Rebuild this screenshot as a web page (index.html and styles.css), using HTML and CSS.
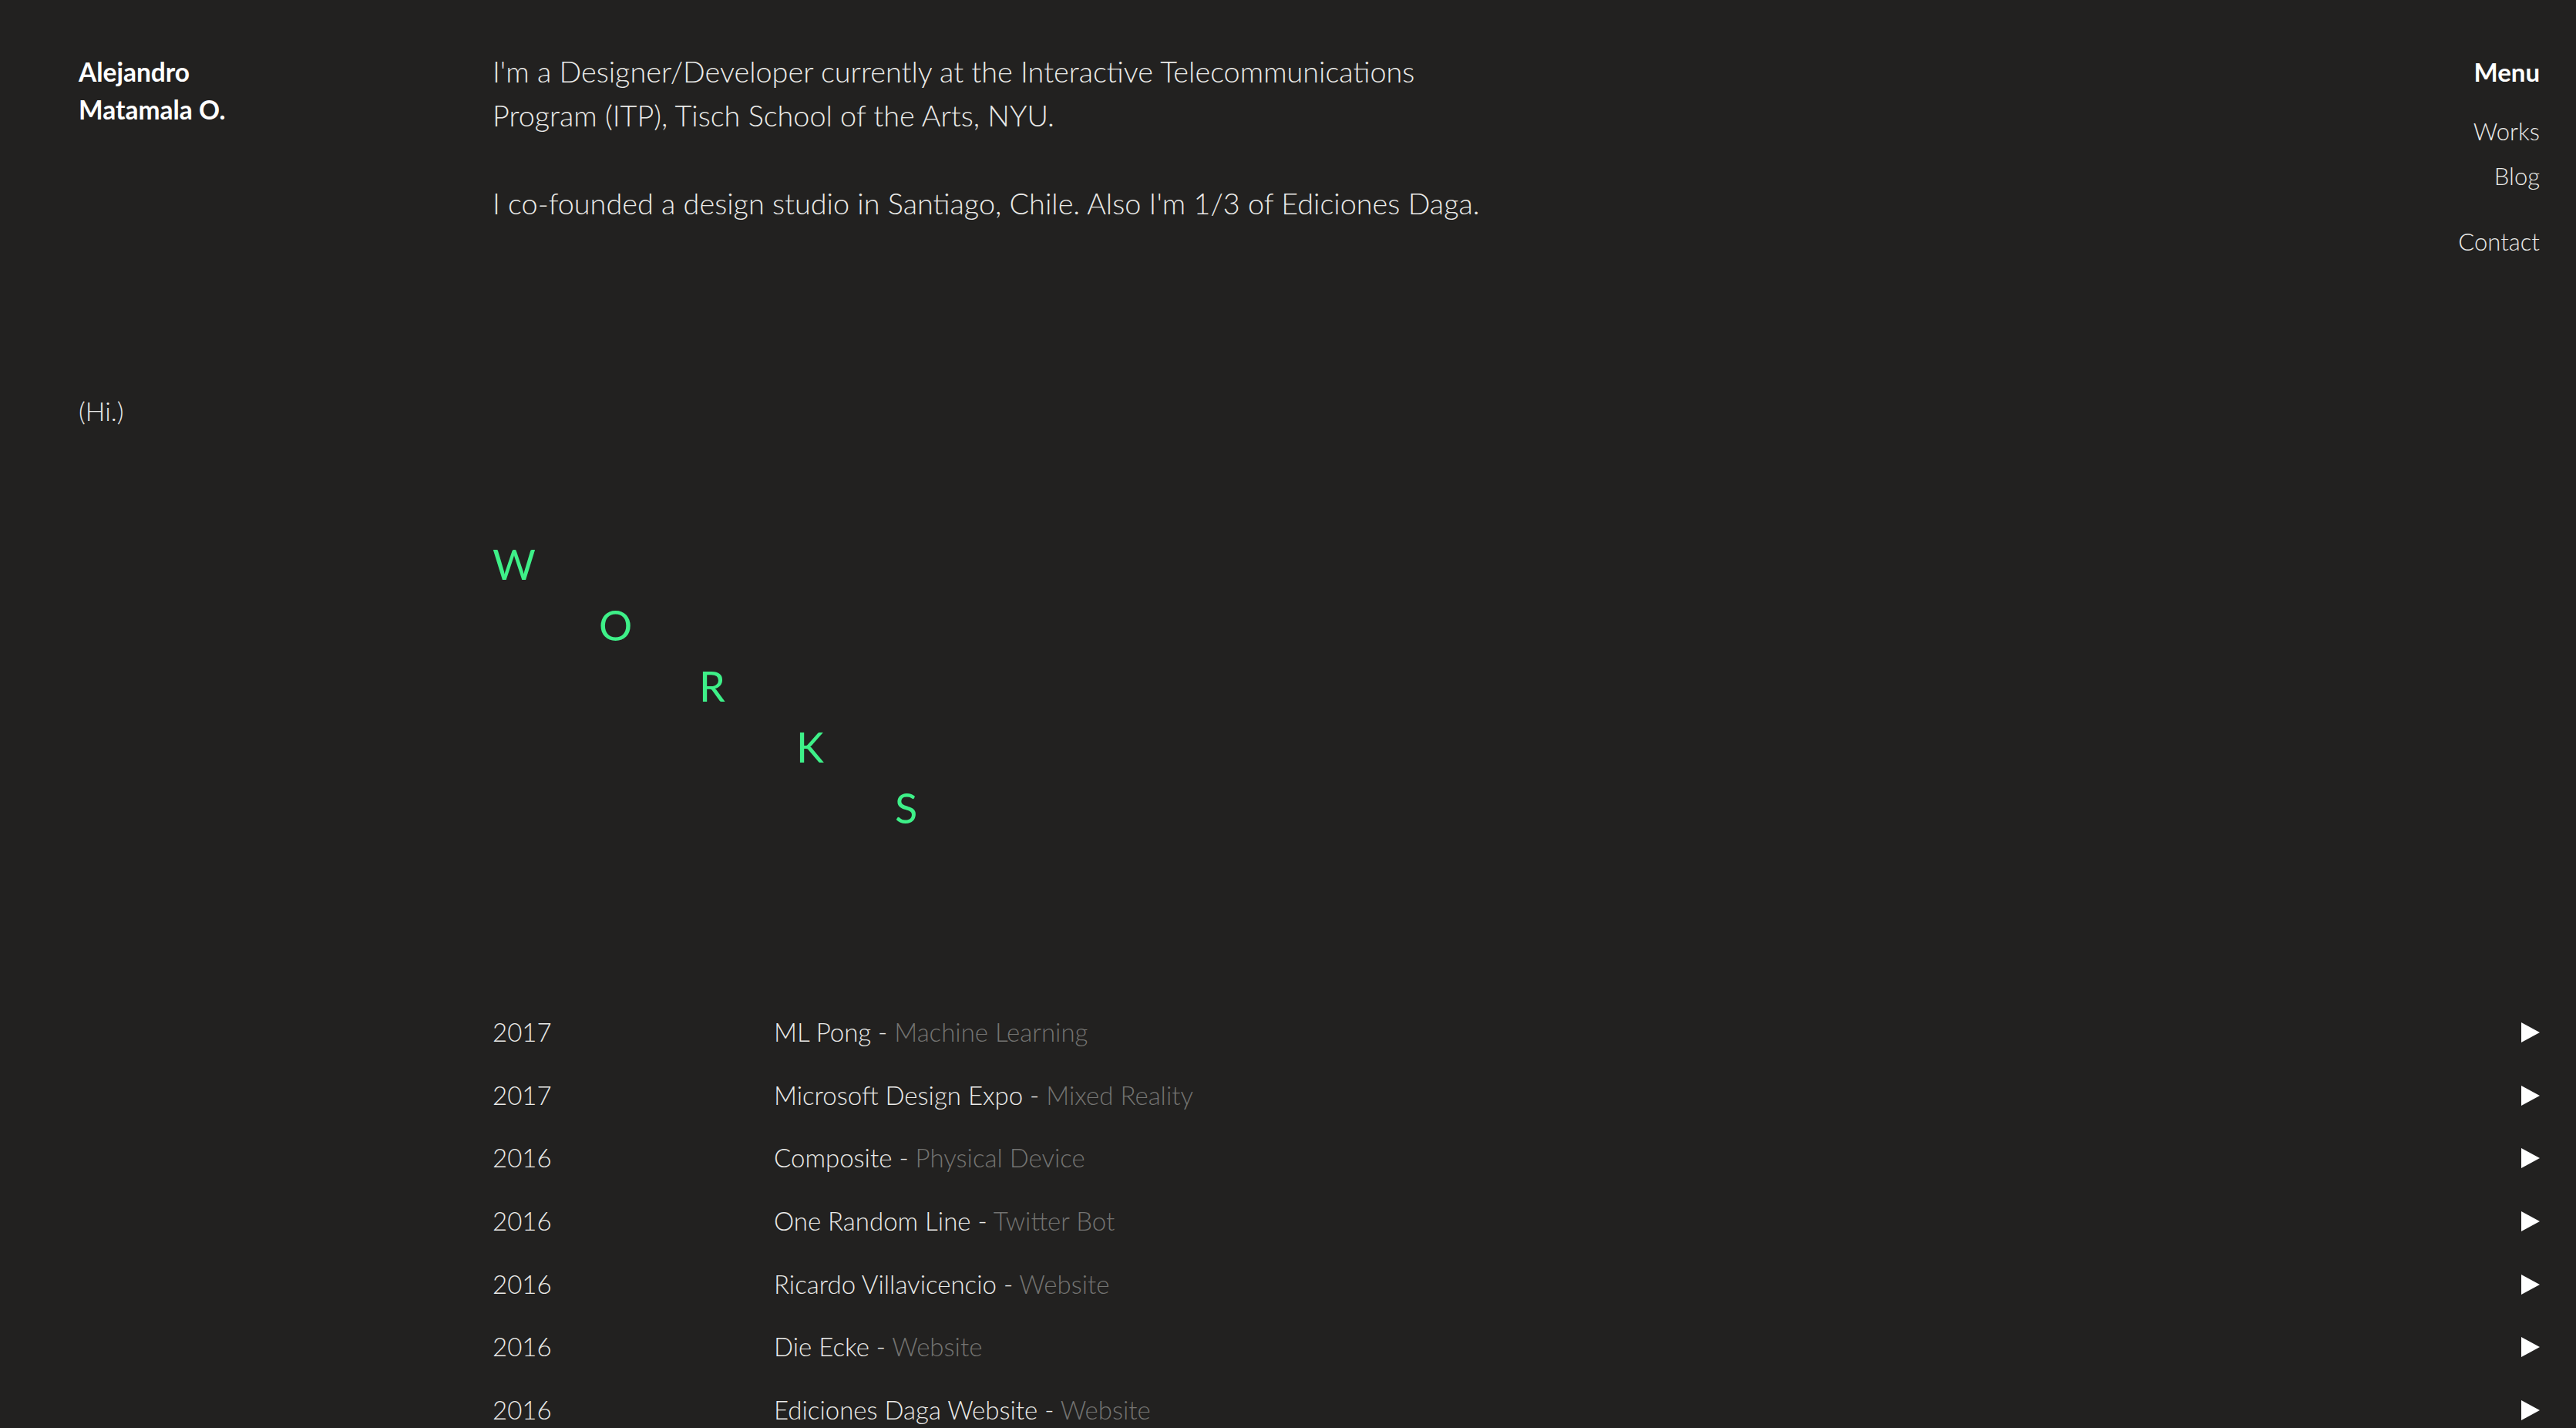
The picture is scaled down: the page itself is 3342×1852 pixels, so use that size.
FILE: index.html
```html
<!DOCTYPE html>
<html lang="en">
<head>
<meta charset="utf-8">
<title>Alejandro Matamala O.</title>
<link rel="stylesheet" href="styles.css">
</head>
<body>
<div class="page">
  <header class="top">
    <div class="name">Alejandro<br>Matamala O.</div>
    <div class="bio">
      <p>I'm a Designer/Developer currently at the Interactive Telecommunications<br>Program (ITP), Tisch School of the Arts, NYU.</p>
      <p>I co-founded a design studio in Santiago, Chile. Also I'm 1/3 of Ediciones Daga.</p>
    </div>
    <nav class="menu">
      <div class="menu-title">Menu</div>
      <a class="menu-link" href="#works">Works</a>
      <a class="menu-link" href="#blog">Blog</a>
      <a class="menu-link menu-contact" href="#contact">Contact</a>
    </nav>
  </header>

  <p class="hi">(Hi.)</p>

  <section class="works" id="works">
    <h2 class="works-title">
      <span class="wl wl1">W</span>
      <span class="wl wl2">O</span>
      <span class="wl wl3">R</span>
      <span class="wl wl4">K</span>
      <span class="wl wl5">S</span>
    </h2>
    <ul class="projects">
      <li class="project"><span class="year">2017</span><span class="ptitle">ML Pong - <span class="kind">Machine Learning</span></span><span class="play"></span></li>
      <li class="project"><span class="year">2017</span><span class="ptitle">Microsoft Design Expo - <span class="kind">Mixed Reality</span></span><span class="play"></span></li>
      <li class="project"><span class="year">2016</span><span class="ptitle">Composite - <span class="kind">Physical Device</span></span><span class="play"></span></li>
      <li class="project"><span class="year">2016</span><span class="ptitle">One Random Line - <span class="kind">Twitter Bot</span></span><span class="play"></span></li>
      <li class="project"><span class="year">2016</span><span class="ptitle">Ricardo Villavicencio - <span class="kind">Website</span></span><span class="play"></span></li>
      <li class="project"><span class="year">2016</span><span class="ptitle">Die Ecke - <span class="kind">Website</span></span><span class="play"></span></li>
      <li class="project"><span class="year">2016</span><span class="ptitle">Ediciones Daga Website - <span class="kind">Website</span></span><span class="play"></span></li>
    </ul>
  </section>
</div>
</body>
</html>
```

FILE: styles.css
```css
html, body {
  margin: 0;
  padding: 0;
  background: #222120;
}

body {
  font-family: "Lato", "Liberation Sans", sans-serif;
  color: #ebebe9;
  font-weight: 300;
}

.page {
  padding: 64px 47px 0 102px;
}

.top {
  display: flex;
  align-items: flex-start;
}

.name {
  width: 537px;
  flex: none;
  margin-top: 5px;
  font-size: 33.5px;
  line-height: 49px;
  font-weight: 700;
  color: #ffffff;
}

.bio {
  flex: 1;
  font-size: 37.8px;
  line-height: 57px;
}

.bio p {
  margin: 0 0 57px 0;
  white-space: nowrap;
}

.bio p:last-child {
  margin-bottom: 0;
}

.menu {
  display: flex;
  flex-direction: column;
  align-items: flex-end;
  margin-top: 5px;
}

.menu-title {
  font-size: 33px;
  line-height: 48px;
  font-weight: 700;
  color: #ffffff;
  margin-bottom: 24px;
}

.menu-link {
  font-size: 31px;
  line-height: 58px;
  color: #ebebe9;
  text-decoration: none;
}

.menu-contact {
  margin-top: 27px;
}

.hi {
  margin: 167px 0 0 0;
  font-size: 34px;
  line-height: 48px;
}

.works {
  margin-left: 537px;
}

.works-title {
  margin: 135px 0 0 0;
  font-size: 54px;
  line-height: 79px;
  font-weight: 400;
  color: #3ef088;
}

.wl {
  display: block;
}

.wl2 { padding-left: 138px; }
.wl3 { padding-left: 268px; }
.wl4 { padding-left: 394px; }
.wl5 { padding-left: 522px; }

.projects {
  list-style: none;
  margin: 211px 0 0 0;
  padding: 0;
}

.project {
  display: grid;
  grid-template-columns: 365px 1fr auto;
  align-items: center;
  height: 81.7px;
  font-size: 33px;
  line-height: 81.7px;
}

.kind {
  color: #747472;
}

.play {
  width: 0;
  height: 0;
  border-left: 24px solid #ffffff;
  border-top: 13px solid transparent;
  border-bottom: 13px solid transparent;
}
```
